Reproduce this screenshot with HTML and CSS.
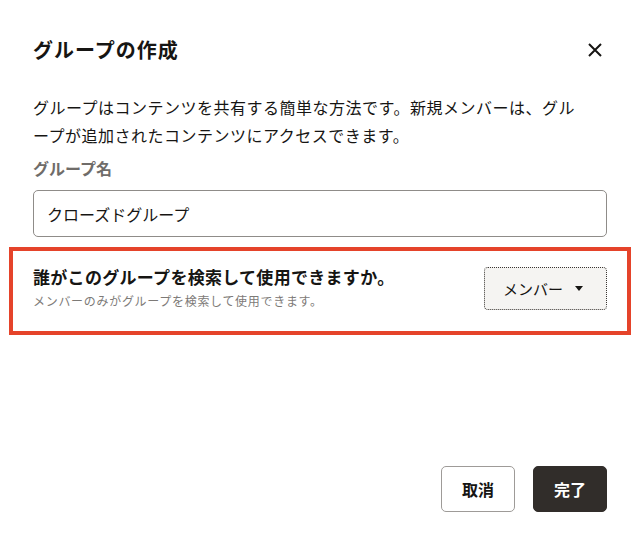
FILE: index.html
```html
<!DOCTYPE html>
<html lang="ja">

<head>
	<meta charset="utf-8">
	<title>グループの作成</title>
	<meta name="viewport" content="width=device-width, initial-scale=1.0">
	<link rel="stylesheet" href="styles.css">
</head>

<body>
	<div class="dialog">
		<div class="dialog-header">
			<h1>グループの作成</h1>
			<button class="close-btn" aria-label="閉じる">
				<svg width="14" height="14" viewBox="0 0 14 14">
					<path d="M1 1 L13 13 M13 1 L1 13" stroke="#161513" stroke-width="2" fill="none" />
				</svg>
			</button>
		</div>

		<p class="desc">グループはコンテンツを共有する簡単な方法です。新規メンバーは、グループが追加されたコンテンツにアクセスできます。</p>

		<label class="field-label" for="groupName">グループ名</label>
		<input type="text" id="groupName" value="クローズドグループ">

		<div class="access-box">
			<div class="access-text">
				<div class="access-title">誰がこのグループを検索して使用できますか。</div>
				<div class="access-sub">メンバーのみがグループを検索して使用できます。</div>
			</div>
			<button class="select-btn">メンバー <span class="caret"></span></button>
		</div>

		<div class="dialog-footer">
			<button class="btn">取消</button>
			<button class="btn primary">完了</button>
		</div>
	</div>
</body>

</html>
```

FILE: styles.css
```css
:root {
	--text: #161513;
	--muted: #6f6c69;
	--border: #8f8c89;
	--accent: #e5432a;
	--dark: #312d2a;
}

* {
	box-sizing: border-box;
}

body {
	margin: 0;
	background: #fff;
	color: var(--text);
	font: 16px/28px "Noto Sans CJK JP", "Noto Sans", sans-serif;
}

.dialog {
	height: 100vh;
	padding: 0 33px 29px;
	display: flex;
	flex-direction: column;
}

.dialog-header {
	display: flex;
	justify-content: space-between;
	align-items: center;
	margin-top: 36px;
}

h1 {
	margin: 0;
	font-size: 20px;
	line-height: 28px;
	font-weight: 700;
	letter-spacing: 1px;
}

.close-btn {
	background: none;
	border: none;
	padding: 0;
	margin-right: 5px;
	display: flex;
	cursor: pointer;
}

.desc {
	margin: 29px 0 0;
	max-width: 552px;
	font-size: 16px;
	line-height: 28px;
	letter-spacing: 0.5px;
	line-break: loose;
}

.field-label {
	display: block;
	margin-top: 7px;
	color: var(--muted);
	font-weight: 700;
	line-height: 24px;
}

input {
	margin-top: 10px;
	height: 47px;
	width: 100%;
	border: 1px solid var(--border);
	border-radius: 5px;
	padding: 0 13px;
	font: inherit;
	color: var(--text);
}

.access-box {
	margin: 10px -24px 0;
	border: 4px solid var(--accent);
	padding: 14px 20px 20px;
	display: flex;
	justify-content: space-between;
	align-items: center;
}

.access-title {
	font-size: 17px;
	font-weight: 700;
	line-height: 24px;
	letter-spacing: 0.3px;
}

.access-sub {
	margin-top: 2px;
	font-size: 12px;
	line-height: 20px;
	letter-spacing: 0.7px;
	color: #7d7a77;
}

.select-btn {
	width: 123px;
	height: 43px;
	background: #f5f4f2;
	border: 1px dotted #3a3633;
	border-radius: 4px;
	font: 15px "Noto Sans CJK JP", sans-serif;
	color: var(--text);
	display: flex;
	align-items: center;
	padding: 0 0 0 18px;
	gap: 12px;
}

.caret {
	width: 0;
	height: 0;
	border-left: 4px solid transparent;
	border-right: 4px solid transparent;
	border-top: 5px solid var(--text);
}

.dialog-footer {
	margin-top: auto;
	display: flex;
	justify-content: flex-end;
	gap: 18px;
}

.btn {
	width: 74px;
	height: 46px;
	border: 1px solid #9e9b98;
	border-radius: 5px;
	background: #fff;
	font: 700 16px "Noto Sans CJK JP", sans-serif;
	color: var(--text);
}

.btn.primary {
	background: var(--dark);
	border-color: var(--dark);
	color: #fff;
}
```
